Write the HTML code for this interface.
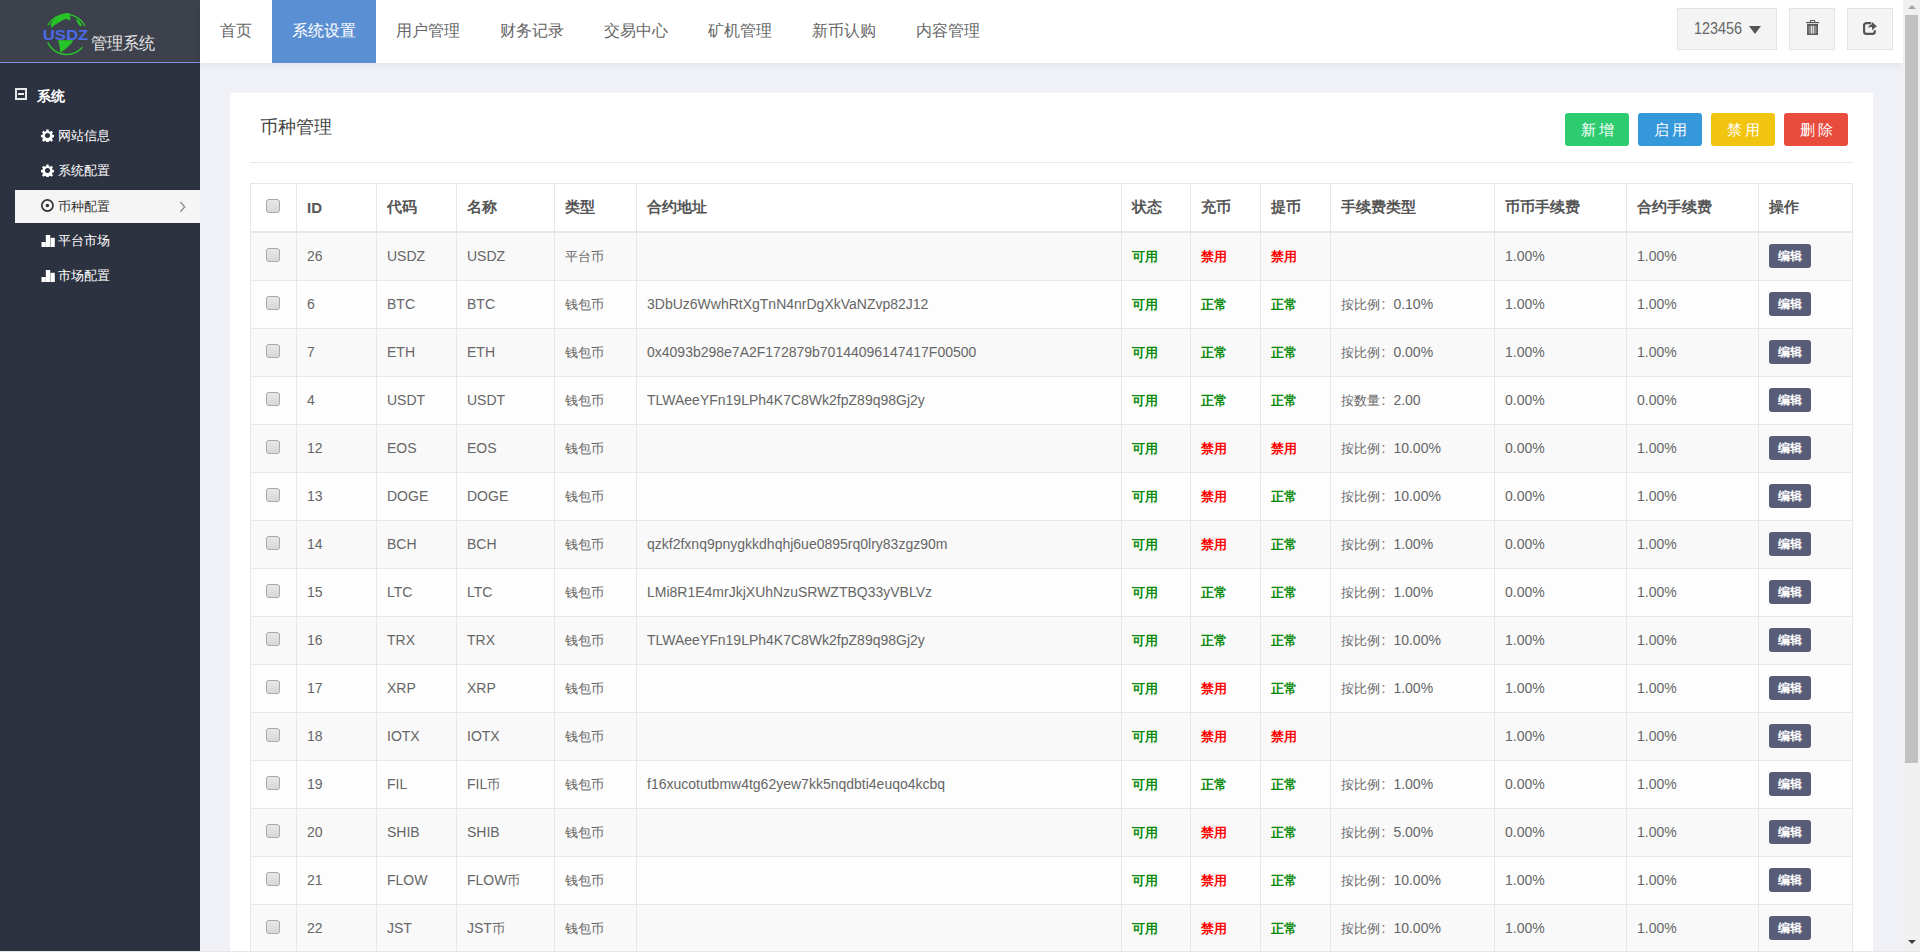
<!DOCTYPE html>
<html><head><meta charset="utf-8">
<style>
*{box-sizing:border-box;margin:0;padding:0}
html,body{width:1920px;height:952px;overflow:hidden}
body{font-family:"Liberation Sans",sans-serif;background:#eff1f6;position:relative;color:#666}
#side{position:absolute;left:0;top:0;width:200px;height:952px;background:#2d3240}
#logo{position:absolute;left:0;top:0;width:200px;height:63px;background:#3c414b;border-bottom:1px solid #7e8ee0}
#logo .t{position:absolute;left:91px;top:33px;font-size:16px;color:#e4e4e4;transform:scaleY(1.05);transform-origin:0 0;line-height:20px;white-space:nowrap}
#menu{position:absolute;left:0;top:63px;width:200px}
.mh{position:absolute;left:37px;top:87px;font-size:14px;font-weight:bold;color:#fff;line-height:18px}
.msq{position:absolute;left:15px;top:88px;width:12px;height:12px;border:2px solid #e8e8e8}
.msq:after{content:"";position:absolute;left:1px;top:3px;width:6px;height:2px;background:#eee}
.mi{position:absolute;left:15px;width:185px;height:33px;font-size:13px;color:#fff;line-height:33px;padding-left:43px}
.mi.act{background:#f5f5f5;color:#333}
.mi svg{position:absolute;left:26px;top:10px}
.mi .arr{position:absolute;right:14px;top:0;color:#888;font-size:14px}
#top{position:absolute;left:200px;top:0;width:1703px;height:63px;background:#fff;box-shadow:0 2px 6px rgba(0,0,0,.06)}
.nav{position:absolute;top:0;height:63px;line-height:62px;font-size:16px;color:#666;text-align:center}
.nav.act{background:#5b8fd3;color:#fff}
.tb{position:absolute;top:8px;height:42px;background:#f4f4f4;border:1px solid #e3e3e3;color:#666}
#card{position:absolute;left:230px;top:93px;width:1643px;height:900px;background:#fff}
#card h3{position:absolute;left:30px;top:23px;font-size:18px;font-weight:normal;color:#444;line-height:22px}
.btn{position:absolute;top:20px;width:64px;height:33px;border-radius:3px;color:#fff;font-size:15px;line-height:33px;text-align:center;letter-spacing:3px;text-indent:3px}
#hr{position:absolute;left:20px;top:69px;width:1603px;height:1px;background:#e8e8e8}
table{position:absolute;left:20px;top:90px;border-collapse:collapse;table-layout:fixed;width:1603px;font-size:14px}
td,th{border:1px solid #e7e7e7;height:48px;padding:0 10px;text-align:left;white-space:nowrap;overflow:hidden;color:#666}
th{font-weight:bold;color:#555;border-bottom:2px solid #e7e7e7;font-size:15px;padding-top:0}
.c{font-size:13px;line-height:0}
.col{margin:0 8px 0 1.5px}
th .cb{top:-3px}
td{padding-bottom:2px}
tbody tr:first-child td{height:49px;padding-top:1px;padding-bottom:1px}
tbody tr:nth-child(odd) td{background:#f9f9f9}
tbody tr:nth-child(even) td{background:#fdfdfd}
.g{color:#0a8a0a}
.r{color:#f00}
.cb{display:inline-block;width:14px;height:14px;position:relative;top:-2px;border:1px solid #a8a8a8;border-radius:3px;background:linear-gradient(#e8e8e8,#d8d8d8);vertical-align:middle;margin-left:5px}
.edit{display:inline-block;position:relative;top:0;width:42px;height:24px;line-height:24px;background:#575c78;color:#fff;font-size:12px;text-align:center;border-radius:3px;font-weight:bold}
#sb{position:absolute;left:1903px;top:0;width:17px;height:952px;background:#f0f0f0}
#thumb{position:absolute;left:2px;top:15px;width:13px;height:748px;background:#c1c1c1}
</style></head><body>
<div id="side">
  <div id="logo">
    <svg style="position:absolute;left:36px;top:8px" width="60" height="52" viewBox="0 0 60 52">
      <path d="M11.7 17.5 A21 21 0 0 1 49 18" stroke="#27c427" stroke-width="1.4" fill="none"/>
      <path d="M11.7 34.4 A21 21 0 0 0 46.4 39.3" stroke="#27c427" stroke-width="1.4" fill="none"/>
      <path d="M14.8 16.5 C17.5 10.5 23 6 30.5 5 L34 5.3 C33.5 7.5 34.5 9.5 34.3 11.8 L33 12.5 C32 11 30.5 11 29.5 11.2 C27.5 11.5 26 12.5 24 14 C23 14.3 22 15.5 21 15.5 C20 16 19.5 17 18.5 17 C17.5 17.5 17 19 16.5 19.5 L15.5 19.5 Z" fill="#27c427"/>
      <path d="M40.2 10.8 C43 11.8 45.3 15 45.8 18 L44 18.3 C43 17 42.5 16 41.5 15 C41 13.5 40.5 12.5 40.2 10.8Z" fill="#27c427"/>
      <path d="M22 32.3 L37.3 32.3 C35.5 36 32 39 26 43.8 L24.3 44 C24 39.5 23 35.5 22 32.3Z" fill="#27c427"/>
      <text x="6.8" y="32" font-family="Liberation Sans" font-weight="bold" font-size="14.5" fill="#4d6ae8" textLength="45.4" lengthAdjust="spacingAndGlyphs">USDZ</text>
    </svg>
    <div class="t">管理系统</div>
  </div>
  <i class="msq"></i>
  <div class="mh">系统</div>
  <div class="mi" style="top:119px"><svg width="13" height="13" viewBox="0 0 13 13"><path fill="#fff" fill-rule="evenodd" d="M5.4 0.5h2.2l0.3 1.7 1.2 0.5 1.4-1 1.5 1.5-1 1.4 0.5 1.2 1.7 0.3v2.2l-1.7 0.3-0.5 1.2 1 1.4-1.5 1.5-1.4-1-1.2 0.5-0.3 1.7h-2.2l-0.3-1.7-1.2-0.5-1.4 1-1.5-1.5 1-1.4-0.5-1.2-1.7-0.3v-2.2l1.7-0.3 0.5-1.2-1-1.4 1.5-1.5 1.4 1 1.2-0.5z M6.5 3.9a2.6 2.6 0 1 0 0.01 0z"/></svg>网站信息</div>
  <div class="mi" style="top:154px"><svg width="13" height="13" viewBox="0 0 13 13"><path fill="#fff" fill-rule="evenodd" d="M5.4 0.5h2.2l0.3 1.7 1.2 0.5 1.4-1 1.5 1.5-1 1.4 0.5 1.2 1.7 0.3v2.2l-1.7 0.3-0.5 1.2 1 1.4-1.5 1.5-1.4-1-1.2 0.5-0.3 1.7h-2.2l-0.3-1.7-1.2-0.5-1.4 1-1.5-1.5 1-1.4-0.5-1.2-1.7-0.3v-2.2l1.7-0.3 0.5-1.2-1-1.4 1.5-1.5 1.4 1 1.2-0.5z M6.5 3.9a2.6 2.6 0 1 0 0.01 0z"/></svg>系统配置</div>
  <div class="mi act" style="top:190px"><svg style="top:9px" width="14" height="14" viewBox="0 0 14 14"><circle cx="6.4" cy="6.5" r="5.6" fill="none" stroke="#333" stroke-width="1.7"/><circle cx="6.4" cy="6.5" r="1.7" fill="#333"/></svg>币种配置<svg class="arr" style="position:absolute;left:164px;top:11px" width="8" height="12" viewBox="0 0 8 12"><path d="M1.4 1 L5.7 5.9 L1.4 10.8" fill="none" stroke="#8a8a8a" stroke-width="1.3"/></svg></div>
  <div class="mi" style="top:224px"><svg style="top:11px" width="14" height="13" viewBox="0 0 14 13"><rect x="0.5" y="7" width="4.3" height="5" fill="#fff"/><rect x="4.8" y="0" width="4.4" height="12" fill="#fff"/><rect x="9.5" y="2.8" width="4.3" height="9.2" fill="#fff"/></svg>平台市场</div>
  <div class="mi" style="top:259px"><svg style="top:11px" width="14" height="13" viewBox="0 0 14 13"><rect x="0.5" y="7" width="4.3" height="5" fill="#fff"/><rect x="4.8" y="0" width="4.4" height="12" fill="#fff"/><rect x="9.5" y="2.8" width="4.3" height="9.2" fill="#fff"/></svg>市场配置</div>
</div>
<div id="top">
  <div class="nav" style="left:0;width:72px">首页</div>
  <div class="nav act" style="left:72px;width:104px">系统设置</div>
  <div class="nav" style="left:176px;width:104px">用户管理</div>
  <div class="nav" style="left:280px;width:104px">财务记录</div>
  <div class="nav" style="left:384px;width:104px">交易中心</div>
  <div class="nav" style="left:488px;width:104px">矿机管理</div>
  <div class="nav" style="left:592px;width:104px">新币认购</div>
  <div class="nav" style="left:696px;width:104px">内容管理</div>
  <div class="tb" style="left:1477px;width:100px;font-size:16px;line-height:40px;padding-left:16px;"><span style="display:inline-block;transform:scaleX(.9);transform-origin:0 50%">123456</span><i style="position:absolute;left:71px;top:17px;width:0;height:0;border-left:6px solid transparent;border-right:6px solid transparent;border-top:8px solid #555"></i></div>
  <div class="tb" style="left:1589px;width:46px"><svg style="position:absolute;left:16px;top:10px" width="14" height="17" viewBox="0 0 14 17"><rect x="4.4" y="1.5" width="4.3" height="2" rx="0.6" fill="none" stroke="#555" stroke-width="1.1"/><rect x="0" y="3" width="13" height="1.2" fill="#555"/><rect x="1.2" y="5.1" width="10.7" height="10.8" rx="0.8" fill="#8c8c8c"/><rect x="1.2" y="5.1" width="10.7" height="1.6" fill="#555"/><rect x="1.2" y="5.1" width="1.3" height="10.8" fill="#555"/><rect x="10.6" y="5.1" width="1.3" height="10.8" fill="#555"/><rect x="1.2" y="14.6" width="10.7" height="1.3" fill="#555"/><rect x="5" y="6.7" width="0.9" height="7.9" fill="#eee"/><rect x="6.9" y="6.7" width="0.9" height="7.9" fill="#eee"/></svg></div>
  <div class="tb" style="left:1647px;width:46px"><svg style="position:absolute;left:14px;top:12px" width="17" height="16" viewBox="0 0 17 16"><path d="M9.3 2.1 L4.5 2.1 Q2.1 2.1 2.1 4.5 L2.1 10.4 Q2.1 12.8 4.5 12.8 L10.4 12.8 Q12.8 12.8 12.8 10.4 L12.8 9.3" fill="none" stroke="#555" stroke-width="2.2"/><path d="M14.8 5.2 L10 1 L10 3.3 C8 3.5 6.5 5 6.1 7 C7.5 6 8.5 5.8 10 5.9 L10 9.2 Z" fill="#555"/></svg></div>
</div>
<div id="card">
  <h3>币种管理</h3>
  <div class="btn" style="left:1335px;background:#2ecc71">新增</div>
  <div class="btn" style="left:1408px;background:#3498db">启用</div>
  <div class="btn" style="left:1481px;background:#f1c40f">禁用</div>
  <div class="btn" style="left:1554px;background:#e74c3c">删除</div>
  <div id="hr"></div>
  <table>
    <colgroup><col style="width:46px"><col style="width:80px"><col style="width:80px"><col style="width:98px"><col style="width:82px"><col style="width:485px"><col style="width:69px"><col style="width:70px"><col style="width:70px"><col style="width:164px"><col style="width:132px"><col style="width:132px"><col style="width:94px"></colgroup>
    <thead><tr><th class="ck"><i class="cb"></i></th><th>ID</th><th>代码</th><th>名称</th><th>类型</th><th>合约地址</th><th>状态</th><th>充币</th><th>提币</th><th>手续费类型</th><th>币币手续费</th><th>合约手续费</th><th>操作</th></tr></thead>
    <tbody>
<tr><td class="ck"><i class="cb"></i></td><td>26</td><td>USDZ</td><td>USDZ</td><td><span class="c">平台币</span></td><td></td><td><b class="g c">可用</b></td><td><b class="r c">禁用</b></td><td><b class="r c">禁用</b></td><td></td><td>1.00%</td><td>1.00%</td><td><span class="edit">编辑</span></td></tr>
<tr><td class="ck"><i class="cb"></i></td><td>6</td><td>BTC</td><td>BTC</td><td><span class="c">钱包币</span></td><td>3DbUz6WwhRtXgTnN4nrDgXkVaNZvp82J12</td><td><b class="g c">可用</b></td><td><b class="g c">正常</b></td><td><b class="g c">正常</b></td><td><span class="c">按比例</span><span class="col">:</span>0.10%</td><td>1.00%</td><td>1.00%</td><td><span class="edit">编辑</span></td></tr>
<tr><td class="ck"><i class="cb"></i></td><td>7</td><td>ETH</td><td>ETH</td><td><span class="c">钱包币</span></td><td>0x4093b298e7A2F172879b70144096147417F00500</td><td><b class="g c">可用</b></td><td><b class="g c">正常</b></td><td><b class="g c">正常</b></td><td><span class="c">按比例</span><span class="col">:</span>0.00%</td><td>1.00%</td><td>1.00%</td><td><span class="edit">编辑</span></td></tr>
<tr><td class="ck"><i class="cb"></i></td><td>4</td><td>USDT</td><td>USDT</td><td><span class="c">钱包币</span></td><td>TLWAeeYFn19LPh4K7C8Wk2fpZ89q98Gj2y</td><td><b class="g c">可用</b></td><td><b class="g c">正常</b></td><td><b class="g c">正常</b></td><td><span class="c">按数量</span><span class="col">:</span>2.00</td><td>0.00%</td><td>0.00%</td><td><span class="edit">编辑</span></td></tr>
<tr><td class="ck"><i class="cb"></i></td><td>12</td><td>EOS</td><td>EOS</td><td><span class="c">钱包币</span></td><td></td><td><b class="g c">可用</b></td><td><b class="r c">禁用</b></td><td><b class="r c">禁用</b></td><td><span class="c">按比例</span><span class="col">:</span>10.00%</td><td>0.00%</td><td>1.00%</td><td><span class="edit">编辑</span></td></tr>
<tr><td class="ck"><i class="cb"></i></td><td>13</td><td>DOGE</td><td>DOGE</td><td><span class="c">钱包币</span></td><td></td><td><b class="g c">可用</b></td><td><b class="r c">禁用</b></td><td><b class="g c">正常</b></td><td><span class="c">按比例</span><span class="col">:</span>10.00%</td><td>0.00%</td><td>1.00%</td><td><span class="edit">编辑</span></td></tr>
<tr><td class="ck"><i class="cb"></i></td><td>14</td><td>BCH</td><td>BCH</td><td><span class="c">钱包币</span></td><td>qzkf2fxnq9pnygkkdhqhj6ue0895rq0lry83zgz90m</td><td><b class="g c">可用</b></td><td><b class="r c">禁用</b></td><td><b class="g c">正常</b></td><td><span class="c">按比例</span><span class="col">:</span>1.00%</td><td>0.00%</td><td>1.00%</td><td><span class="edit">编辑</span></td></tr>
<tr><td class="ck"><i class="cb"></i></td><td>15</td><td>LTC</td><td>LTC</td><td><span class="c">钱包币</span></td><td>LMi8R1E4mrJkjXUhNzuSRWZTBQ33yVBLVz</td><td><b class="g c">可用</b></td><td><b class="g c">正常</b></td><td><b class="g c">正常</b></td><td><span class="c">按比例</span><span class="col">:</span>1.00%</td><td>0.00%</td><td>1.00%</td><td><span class="edit">编辑</span></td></tr>
<tr><td class="ck"><i class="cb"></i></td><td>16</td><td>TRX</td><td>TRX</td><td><span class="c">钱包币</span></td><td>TLWAeeYFn19LPh4K7C8Wk2fpZ89q98Gj2y</td><td><b class="g c">可用</b></td><td><b class="g c">正常</b></td><td><b class="g c">正常</b></td><td><span class="c">按比例</span><span class="col">:</span>10.00%</td><td>1.00%</td><td>1.00%</td><td><span class="edit">编辑</span></td></tr>
<tr><td class="ck"><i class="cb"></i></td><td>17</td><td>XRP</td><td>XRP</td><td><span class="c">钱包币</span></td><td></td><td><b class="g c">可用</b></td><td><b class="r c">禁用</b></td><td><b class="g c">正常</b></td><td><span class="c">按比例</span><span class="col">:</span>1.00%</td><td>1.00%</td><td>1.00%</td><td><span class="edit">编辑</span></td></tr>
<tr><td class="ck"><i class="cb"></i></td><td>18</td><td>IOTX</td><td>IOTX</td><td><span class="c">钱包币</span></td><td></td><td><b class="g c">可用</b></td><td><b class="r c">禁用</b></td><td><b class="r c">禁用</b></td><td></td><td>1.00%</td><td>1.00%</td><td><span class="edit">编辑</span></td></tr>
<tr><td class="ck"><i class="cb"></i></td><td>19</td><td>FIL</td><td>FIL<span class="c">币</span></td><td><span class="c">钱包币</span></td><td>f16xucotutbmw4tg62yew7kk5nqdbti4euqo4kcbq</td><td><b class="g c">可用</b></td><td><b class="g c">正常</b></td><td><b class="g c">正常</b></td><td><span class="c">按比例</span><span class="col">:</span>1.00%</td><td>0.00%</td><td>1.00%</td><td><span class="edit">编辑</span></td></tr>
<tr><td class="ck"><i class="cb"></i></td><td>20</td><td>SHIB</td><td>SHIB</td><td><span class="c">钱包币</span></td><td></td><td><b class="g c">可用</b></td><td><b class="r c">禁用</b></td><td><b class="g c">正常</b></td><td><span class="c">按比例</span><span class="col">:</span>5.00%</td><td>0.00%</td><td>1.00%</td><td><span class="edit">编辑</span></td></tr>
<tr><td class="ck"><i class="cb"></i></td><td>21</td><td>FLOW</td><td>FLOW<span class="c">币</span></td><td><span class="c">钱包币</span></td><td></td><td><b class="g c">可用</b></td><td><b class="r c">禁用</b></td><td><b class="g c">正常</b></td><td><span class="c">按比例</span><span class="col">:</span>10.00%</td><td>1.00%</td><td>1.00%</td><td><span class="edit">编辑</span></td></tr>
<tr><td class="ck"><i class="cb"></i></td><td>22</td><td>JST</td><td>JST<span class="c">币</span></td><td><span class="c">钱包币</span></td><td></td><td><b class="g c">可用</b></td><td><b class="r c">禁用</b></td><td><b class="g c">正常</b></td><td><span class="c">按比例</span><span class="col">:</span>10.00%</td><td>1.00%</td><td>1.00%</td><td><span class="edit">编辑</span></td></tr>
    </tbody>
  </table>
</div>
<div id="sb"><i style="position:absolute;left:4.5px;top:4.5px;width:0;height:0;border-left:4px solid transparent;border-right:4px solid transparent;border-bottom:4px solid #a3a3a3"></i><div id="thumb"></div><i style="position:absolute;left:4.5px;top:940px;width:0;height:0;border-left:4px solid transparent;border-right:4px solid transparent;border-top:4px solid #404040"></i></div>
<div style="position:absolute;left:0;top:951px;width:1920px;height:1px;background:#e6e6e6"></div>
</body></html>
